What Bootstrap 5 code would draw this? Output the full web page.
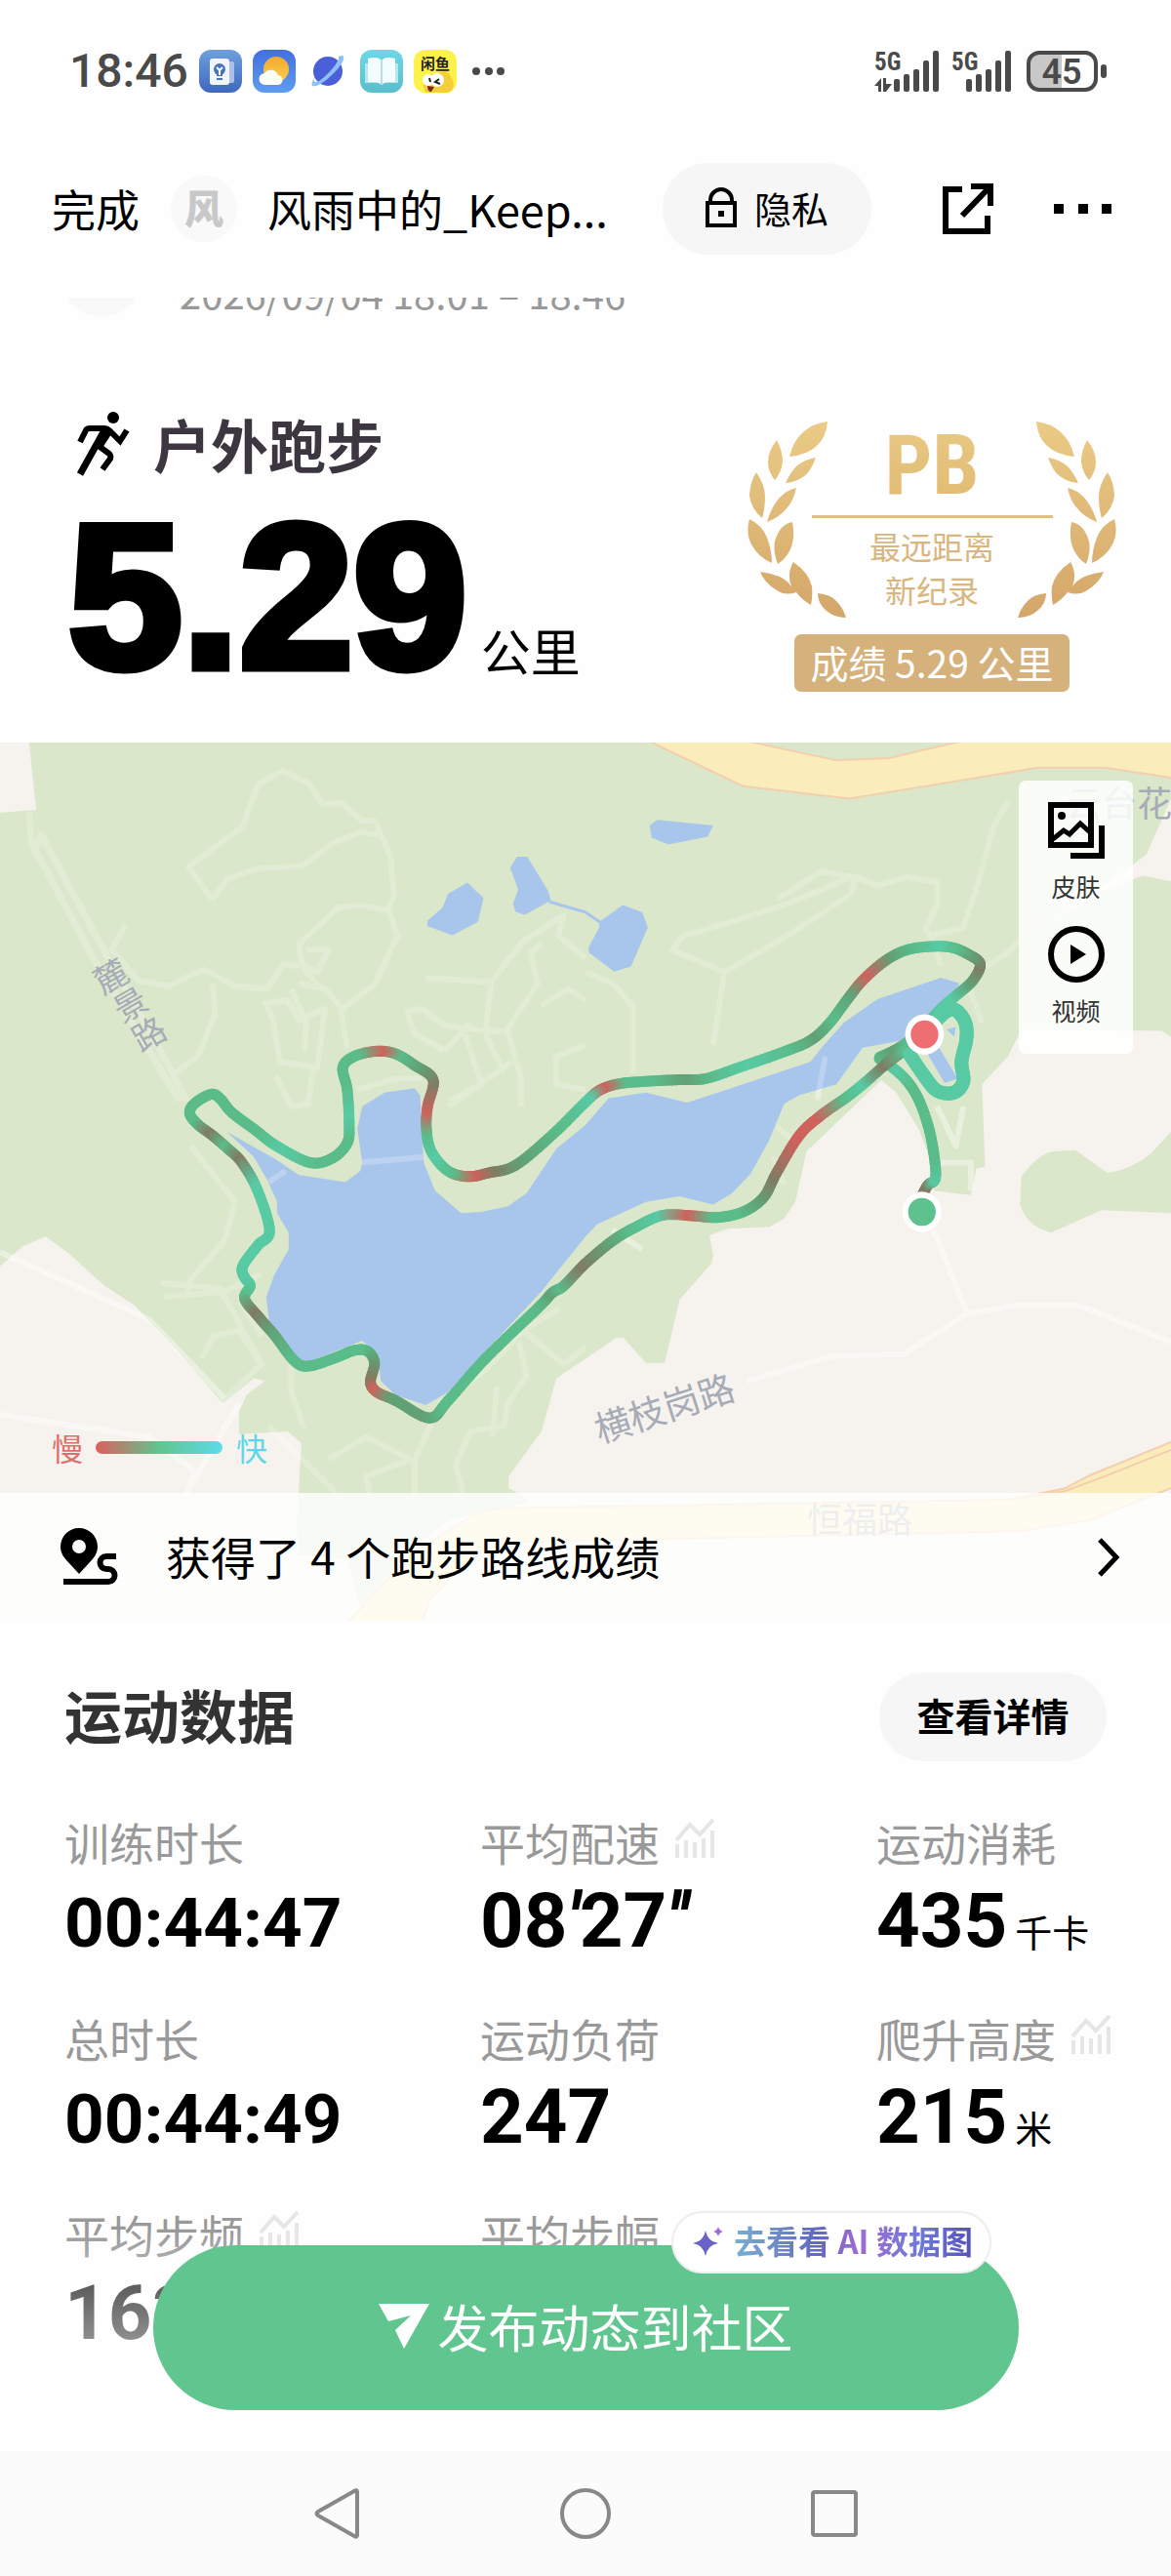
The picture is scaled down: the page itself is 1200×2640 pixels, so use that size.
<!DOCTYPE html>
<html lang="zh-CN">
<head>
<meta charset="utf-8">
<meta name="viewport" content="width=device-width, initial-scale=1">
<title>户外跑步</title>
<link href="https://cdn.jsdelivr.net/npm/bootstrap@5.3.0/dist/css/bootstrap.min.css" rel="stylesheet">
<style>
  body { font-family: "Noto Sans CJK SC", sans-serif; color: #000; background: #fefefe; overflow-x: hidden; }
  button { font-family: inherit; color: inherit; }
  svg { display: block; flex: none; overflow: visible; }
  .num { font-family: Roboto, "Noto Sans CJK SC", sans-serif; }
  .plain { border: 0; background: none; padding: 0; }

  .statusbar { height: 146px; padding: 0 66px 0 71px; color: #4a4a4a; }
  .clock { font-size: 48px; line-height: 60px; font-weight: 500; }
  .apps { gap: 11px; margin-left: 11px; }
  .signals { gap: 11px; }

  .topbar { padding: 21px 60px 44px 53px; font-size: 45px; line-height: 60px; }
  .avatar { width: 68px; height: 68px; margin-left: 32px; background: #f9f9f9; color: #c8c8c8; font-size: 40px; line-height: 64px; font-weight: 900; }
  .name { margin-left: 31px; }
  .pill { background: #f6f6f6; border: 0; border-radius: 50px; height: 94px; }
  .pill-privacy { width: 214px; font-size: 38px; gap: 18px; margin-left: auto; margin-right: 73px; padding-bottom: 4px; }
  .more { margin-left: 62px; }

  .peek { height: 60px; overflow: hidden; padding: 0 62px; color: #999; font-size: 40px; line-height: 50px; }
  .peek-row { margin-top: -64px; }
  .peek-dot { width: 84px; height: 84px; margin-right: 38px; background: #f9f9f9; }

  .hero { height: 396px; padding: 57px 56px 0 70px; }
  .hero-title { font-size: 59px; line-height: 66px; color: #3b3640; font-weight: 700; margin-left: 23px; }
  .distance { margin-top: 45px; line-height: 160px; }
  .distance-value { font-family: "Liberation Sans", Arial, sans-serif; font-size: 210px; font-weight: 700; line-height: 158px; -webkit-text-stroke: 9px #000; }
  .distance-unit { font-size: 51px; line-height: 50px; margin-left: 14px; }
  .award { width: 378px; margin-top: 10px; }
  .wreath { height: 202px; position: relative; }
  .wreath svg { position: absolute; inset: 0; }
  .pb { font-family: "Roboto Condensed", "Liberation Sans Narrow", "Open Sans Condensed", Roboto, sans-serif; font-weight: 700; font-size: 86px; line-height: 90px; padding-bottom: 6px; background: linear-gradient(#e9c983, #dfb970); -webkit-background-clip: text; color: transparent; }
  .award-rule { width: 247px; height: 3px; background: #e0c083; }
  .award-text { font-size: 32px; line-height: 45px; color: #d9b680; margin-top: 6px; }
  .award-score { background: #d5b17b; color: #fff; border-radius: 7px; font-size: 39px; line-height: 57px; padding: 0 16px 2px; margin-top: 16px; }

  .map { position: relative; aspect-ratio: 1200 / 900; overflow: hidden; }
  .map > svg { position: absolute; inset: 0; width: 100%; height: 100%; }
  .lane { fill: none; stroke: #fff; stroke-opacity: .22; stroke-width: 6; stroke-linejoin: round; }
  .map path, .map line { vector-effect: non-scaling-stroke; }
  .water { fill: #a8c6ec; }
  .park { fill: #dae7ca; }
  .town { fill: #f6f3ef; }
  .road { fill: #faedbb; stroke: #f3cfae; stroke-width: 2; }
  .tools { position: absolute; top: 39px; right: 39px; width: 117px; height: 280px; background: rgba(255,255,255,.85); border-radius: 7px; padding-top: 22px; font-size: 25px; line-height: 36px; color: #333; }
  .tools button { color: #333; margin-bottom: 23px; }
  .tools svg { margin-bottom: 10px; }
  .legend-row { position: absolute; left: 53px; bottom: 156px; font-size: 32px; line-height: 44px; }
  .ramp { width: 130px; height: 13px; border-radius: 7px; background: linear-gradient(90deg, #dc5f5c, #60c58f 50%, #5fdbea); margin: 0 14px 0 13px; }
  .slow { color: #df6f6b; }
  .fast { color: #63d5ea; }
  .routes { position: absolute; inset: auto 0 0 0; height: 131px; background: rgba(255,255,255,.8); color: #000; text-decoration: none; padding: 0 52px 0 62px; font-size: 46px; line-height: 60px; gap: 48px; }
  .routes span { padding-bottom: 4px; }

  .stats { padding: 53px 66px 0; }
  .stats-title { font-size: 59px; line-height: 86px; font-weight: 700; color: #333; margin: 0; padding-bottom: 5px; }
  .pill-detail { width: 233px; height: 91px; font-size: 39px; font-weight: 700; padding: 0 0 5px; }
  .metrics { display: grid; grid-template-columns: minmax(0, 426fr) minmax(0, 406fr) minmax(0, 236fr); row-gap: 57px; margin: 59px 0 0; }
  .metrics dt { font-size: 46px; line-height: 46px; height: 50px; font-weight: 400; color: #999; white-space: nowrap; gap: 16px; }
  .metrics dt svg { width: 40px; height: 40px; }
  .metrics dd { margin: 14px 0 0; font-size: 78px; line-height: 82px; font-weight: 700; white-space: nowrap; height: 80px; }
  .metrics dd.clocked { font-size: 71px; line-height: 86px; }
  .unit { font-size: 38px; font-weight: 400; margin-left: 8px; }

  .publish { position: relative; margin-top: -109px; padding: 0 156px 42px 157px; }
  .publish::before { content: ""; position: absolute; inset: -16px 0 0 0; background: linear-gradient(rgba(254,254,254,0), rgba(254,254,254,.36) 56px, rgba(254,254,254,.62) 130px, #fefefe 170px); }
  .publish-btn { position: relative; height: 169px; border: 0; border-radius: 85px; background: #60c58f; color: #fff; font-size: 52px; gap: 8px; padding: 0 0 3px; }
  .ai-chip { position: absolute; top: -35px; right: 184px; height: 64px; border-radius: 32px; border: 2px solid #eeeef2; background: #fff; padding: 0 17px 3px 20px; gap: 11px; font-size: 33px; font-weight: 700; }
  .ai-chip span { background: linear-gradient(90deg, #7ab0d2, #6168c0 35%, #a06bd0 52%, #6f7ad8 78%, #5550b8); -webkit-background-clip: text; color: transparent; }
  .sysnav { height: 128px; background: #fbfbfb; padding: 0 321px; }
</style>
<script src="https://cdn.jsdelivr.net/npm/bootstrap@5.3.0/dist/js/bootstrap.bundle.min.js"></script>
</head>
<body>
<div class="statusbar d-flex align-items-center">
  <span class="clock num">18:46</span>
  <div class="apps d-flex align-items-center">
    <svg width="44" height="44" viewBox="0 0 44 44"><defs><linearGradient id="a" x2="0" y2="1"><stop stop-color="#6ea0dc"/><stop offset="1" stop-color="#3f68be"/></linearGradient></defs><rect width="44" height="44" rx="12" fill="url(#a)"/><rect x="27" y="12" width="9" height="22" rx="2" fill="#a9c0ea"/><rect x="11" y="9" width="20" height="27" rx="3" fill="#f2f6fc"/><circle cx="21" cy="20" r="6" fill="#4672bf"/><path d="M18 24h6v3h-6zM18 29h6v2h-6z" fill="#4672bf"/><path d="M18 18l3 3 3-3M21 21v5" fill="none" stroke="#fff" stroke-width="2"/></svg>
    <svg width="44" height="44" viewBox="0 0 44 44"><defs><linearGradient id="b" x2="0" y2="1"><stop stop-color="#426fe0"/><stop offset="1" stop-color="#5d9df0"/></linearGradient><linearGradient id="c" x2="0" y2="1"><stop stop-color="#f3a92e"/><stop offset="1" stop-color="#f8cf4c"/></linearGradient></defs><rect width="44" height="44" rx="12" fill="url(#b)"/><circle cx="24" cy="20" r="13" fill="url(#c)"/><path d="M13 36a6 6 0 0 1-1-12 8 8 0 0 1 14 2 5 5 0 0 1-1 10z" fill="#fffdf8"/></svg>
    <svg width="44" height="44" viewBox="0 0 44 44"><circle cx="22" cy="22" r="15" fill="#4a5fd8"/><path d="M8 29c-4 7-3 9 2 8C18 35 36 18 38 10c1-4-1-5-5-3 2 6-19 27-23 26-2 0-3-2-2-4z" fill="#8fc0f8"/></svg>
    <svg width="44" height="44" viewBox="0 0 44 44"><defs><linearGradient id="d" x2="0" y2="1"><stop stop-color="#6cd8e8"/><stop offset="1" stop-color="#5bbecb"/></linearGradient></defs><rect width="44" height="44" rx="12" fill="url(#d)"/><path d="M5 14h34v20H5z" fill="#b6e6ee"/><path d="M22 11c-4-4-9-3-14-2v24c5 0 10-1 14 3 4-4 9-3 14-3V9c-5-1-10-2-14 2z" fill="#f3fcfe"/><path d="M22 11v25" stroke="#b5e0ea" stroke-width="2"/></svg>
    <svg width="44" height="44" viewBox="0 0 44 44"><rect width="44" height="44" rx="12" fill="#fdf248"/><path d="M10 38Q8 24 23 25 34 18 38 28q5 6 1 14-3 2-6 2H12z" fill="#f6cf35"/><circle cx="15" cy="31" r="6" fill="#fff"/><circle cx="24" cy="31" r="7" fill="#fff"/><path d="M16 29l1 4M26 30l-4 3 5 2" fill="none" stroke="#222" stroke-width="2"/><path d="M14 37l7 1-3 5q-4 0-4-6z" fill="#7b2a16"/><text x="22" y="20" font-size="15" font-weight="700" text-anchor="middle" fill="#222">闲鱼</text></svg>
  </div>
  <svg class="ms-3" width="36" height="10" viewBox="0 0 36 10" fill="#4a4a4a"><circle cx="4" cy="5" r="4"/><circle cx="17" cy="5" r="4"/><circle cx="29" cy="5" r="4"/></svg>
  <div class="signals d-flex ms-auto align-items-center">
    <svg width="68" height="42" viewBox="0 0 68 42" fill="#4a4a4a"><text x="0" y="20" font-size="25" font-weight="700" font-family="Roboto Condensed, Roboto">5G</text><path d="M7 28v14h-3v-6h-4zM9 28h3v6h6l-6 8h-3z"/><rect x="20" y="29" width="6" height="13" rx="2"/><rect x="30" y="24" width="6" height="18" rx="2"/><rect x="40" y="19" width="6" height="23" rx="2"/><rect x="50" y="10" width="6" height="32" rx="2"/><rect x="60" y="0" width="6" height="42" rx="2"/></svg>
    <svg width="66" height="42" viewBox="0 0 66 42" fill="#4a4a4a"><text x="0" y="20" font-size="25" font-weight="700" font-family="Roboto Condensed, Roboto">5G</text><rect x="15" y="29" width="6" height="13" rx="2"/><rect x="25" y="24" width="6" height="18" rx="2"/><rect x="35" y="19" width="6" height="23" rx="2"/><rect x="45" y="10" width="6" height="32" rx="2"/><rect x="55" y="0" width="6" height="42" rx="2"/></svg>
    <svg width="82" height="42" viewBox="0 0 82 42"><path d="M12 2h24v38H12A10 10 0 0 1 2 30V12A10 10 0 0 1 12 2z" fill="#c8c8c8"/><rect x="2" y="2" width="69" height="38" rx="11" fill="none" stroke="#4a4a4a" stroke-width="4"/><rect x="76" y="14" width="6" height="14" rx="3" fill="#4a4a4a"/><text x="36" y="34" font-family="Roboto" font-weight="600" font-size="36" text-anchor="middle" fill="#4a4a4a">45</text></svg>
  </div>
</div>

<header class="topbar d-flex align-items-center">
  <button class="plain">完成</button>
  <span class="avatar rounded-circle text-center">风</span>
  <span class="name text-nowrap">风雨中的_Keep...</span>
  <button class="pill pill-privacy d-flex align-items-center justify-content-center"><svg width="32" height="41" viewBox="0 0 32 41" fill="none" stroke="#000" stroke-width="4"><path d="M5 15V13a11 11 0 0 1 22 0v2"/><rect x="2" y="16" width="28" height="23"/><rect x="13" y="24" width="6" height="6" fill="#000" stroke="none"/></svg>隐私</button>
  <button class="plain" aria-label="分享"><svg width="52" height="52" viewBox="0 0 52 52" fill="none" stroke="#000" stroke-width="6"><path d="M20 6H3v43h43V33M29 3h20v20M48 4L20 33"/></svg></button>
  <button class="plain more" aria-label="更多"><svg width="60" height="52" viewBox="0 0 60 52"><path d="M0 21h10v10H0zM25 21h10v10H25zM49 21h10v10H49z"/></svg></button>
</header>

<div class="peek">
  <div class="peek-row d-flex align-items-end">
    <span class="peek-dot rounded-circle"></span>
    <span>2026/09/04 18:01 – 18:46</span>
  </div>
</div>

<section class="hero d-flex justify-content-between">
  <div>
    <div class="d-flex align-items-center">
      <svg width="64" height="66" viewBox="-7 0 64 66" fill="none" stroke="#000"><circle cx="39" cy="6" r="6" fill="#000" stroke="none"/><path d="M5 31l6-12q1-2 4-2h15q3 0 5 2l11 11 7-11" stroke-width="6"/><path d="M28 15h5l6 5-11 17-7-3z" fill="#000" stroke="none"/><path d="M30 19L5 64" stroke-width="7"/><path d="M24 35l11 8q2 2 1 5l-8 11" stroke-width="6"/></svg>
      <span class="hero-title">户外跑步</span>
    </div>
    <div class="distance d-flex align-items-end"><span class="distance-value">5.29</span><span class="distance-unit">公里</span></div>
  </div>
  <div class="award d-flex flex-column align-items-center">
    <div class="wreath w-100 d-flex flex-column align-items-center">
      <svg width="378" height="202" viewBox="764 432 378 202">
        <defs><linearGradient id="gold" gradientUnits="userSpaceOnUse" x1="0" y1="432" x2="0" y2="634"><stop stop-color="#ebcb86"/><stop offset="1" stop-color="#d3a669"/></linearGradient>
        <g id="twig"><path d="M846 432Q845 447 836 456 826 466 807 468 811 451 822 442 831 434 846 432zM794 451Q800 462 800 473 799 484 792 492 785 483 785 474 785 462 794 451zM834 469Q829 483 822 488 814 494 803 495 808 484 814 478 822 471 834 469zM773 484Q782 497 782 509 782 521 779 531 767 521 766 507 767 493 773 484zM814 500Q811 514 804 521 797 530 784 535 787 524 793 515 801 503 814 500zM766 532Q779 538 784 551 789 564 789 577 775 571 768 558 762 546 766 532zM810 535Q813 551 808 563 803 573 795 578 790 565 792 555 797 537 810 535zM811 576Q827 587 830 601 831 612 829 620 819 614 814 607 803 611 794 605 781 597 777 586 787 587 797 591 805 595 809 601 804 588 811 576zM836 608Q849 609 855 616 862 623 865 633 853 633 845 626 836 619 836 608z"/></g></defs>
        <use href="#twig" fill="url(#gold)"/><use href="#twig" fill="url(#gold)" transform="matrix(-1 0 0 1 1906 0)"/>
      </svg>
      <span class="pb">PB</span>
      <span class="award-rule"></span>
      <span class="award-text text-center">最远距离<br>新纪录</span>
    </div>
    <span class="award-score">成绩 5.29 公里</span>
  </div>
</section>

<section class="map">
  <svg viewBox="0 0 3136 1568" preserveAspectRatio="none">
    <rect class="park" width="3136" height="1568"/>
    <path class="town" d="M0 0H78L97 120 0 125zM0 935L60 900 122 882 180 910 280 970 360 1005 480 1090 597 1180 680 1135 710 1140 660 1165 640 1195V1235L770 1230 807 1250 795 1400 800 1450 930 1460 975 1568H0z"/>
    <path class="town" d="M2360 603L2400 625 2460 690 2500 760V800L2600 808 2615 760 2638 758 2630 610 2700 560 2735 512 3110 515 3136 525V1568H940L1100 1440 1200 1390 1420 1355 1362 1330V1310L1450 1230 1490 1135 1568 1100 1650 1063H1670L1730 1108H1780L1820 995 1905 930 1910 915 1900 880 1950 868 2060 865 2100 850 2130 820 2160 730z"/>
    <path class="town" d="M2800 320L2980 245 3070 200 3136 100V248L3060 238 2960 262 2830 310z"/>
    <path class="park" d="M2735 775Q2780 735 2820 730L2880 728 2965 768Q3020 765 3080 735L3136 695V840L2950 835 2815 875Q2750 865 2732 825z"/>
    <g class="lane">
      <path d="M78 125L85 180 250 385 480 640M95 190L110 165 290 385 450 575 500 640" stroke-width="7"/>
      <path d="M568 280L505 222 650 150 690 75 757 50 825 72 865 110 915 108 970 140 1005 140 1020 165 1045 200 1055 270 1040 300 965 290 905 295 800 360 810 400 860 440M568 280L610 243 690 225 810 220 890 180 965 160 1015 165M1040 300L1065 345 1005 430 910 480M800 400L760 395 715 440 630 435 545 405 450 435 370 425 300 370 335 325M570 430L575 485 530 560 470 590M710 465L770 460 800 495 870 475 850 580 750 570 730 490zM800 430L870 440 910 470 930 545M740 595L780 650 825 645 840 580M820 370L880 370 850 410 800 390M780 440L820 500 815 550"/>
      <path d="M1140 420L1315 428 1400 355 1510 308 1495 345 1568 385M1315 428L1300 515 1190 505 1130 475 1090 480 1110 520 1190 550M1300 515L1360 515 1395 600V650M1245 520L1290 610 1200 640M1300 520L1350 590M1190 550L1260 500M1450 470L1520 440 1568 460M1370 570L1200 650M1450 360L1420 375 1440 430 1360 510M1568 540L1490 560 1490 610 1568 620M955 620L1060 600 1130 600"/>
      <path d="M1568 410L1640 430 1695 470V590M1940 410L1800 370 1830 345 1960 320 2100 290 2280 240 2200 230 2080 280M1940 410L2120 340 2280 270 2290 240 2350 255 2430 240 2510 250 2510 290 2480 330 2490 345 2580 330 2620 250 2660 150 2700 105M1940 410L1910 540M2490 345L2520 400M2640 400L2700 375 2800 300M2590 430L2630 500M2200 550L2190 640M2080 685L2140 720M2070 740L2100 790"/>
      <path d="M510 720L630 820 600 890 510 960 500 985M430 965L590 975 700 1110M440 990L600 980M700 950L600 980M540 1100L570 1060 640 1050 700 1110 590 1180M640 990L700 1060M780 1110L780 1160 815 1225M720 1220L900 1340M880 1280L980 1240 1100 1280 980 1310 990 1340M1110 1568V1280L1180 1180 1300 1120 1400 1050 1500 1010M1400 1050L1510 1110 1568 1080M1390 1070L1410 1130 1360 1180 1350 1220 1260 1230 1220 1290 1240 1340M1330 1150L1320 1240"/>
      <path d="M1640 870L1720 905M2500 870L2590 1020M2000 1140L2230 1095 2420 1092 2590 1020 2720 1005 2890 1005 3136 1070M2510 650L2560 720 2580 650M2510 750H2600V800M0 1200L400 1240 520 1300 500 1340 640 1180M0 910L400 1030 600 1170" stroke-opacity=".4"/>
    </g>
    <path class="water" d="M608 695L740 745 800 772 925 785 965 765 970 750 957 690 970 650 1030 625 1110 617 1125 630 1130 690 1135 750 1165 800 1235 840 1290 838 1360 828 1410 805 1490 725 1568 683 1630 635 1730 625 1840 643 1990 610 2170 570 2200 545 2260 500 2350 458 2520 420 2570 430 2540 460 2430 530 2310 545 2240 610 2140 630 2100 645 2060 710 2010 770 1960 805 1910 825 1820 810 1730 820 1600 860 1568 882 1450 980 1310 1080 1200 1160 1140 1183 1060 1165 1020 1140 1010 1090 970 1068 830 1105 790 1100 720 1030 713 990 735 950 773 905V875L742 840V820L715 780 680 740z"/>
    <path class="water" d="M1145 318L1185 295 1200 270 1252 250 1295 278 1280 320 1212 344 1145 328zM1385 204H1412L1468 265 1475 282 1405 308 1380 302 1374 288 1388 262 1366 224zM1605 320L1668 290 1720 303 1735 330 1690 400 1645 409 1577 375V365L1605 330zM1740 148L1760 138 1910 148 1895 168 1790 182 1745 170zM2470 540L2515 545 2565 600 2530 608zM2535 512L2560 508 2555 525z"/>
    <path d="M1470 284L1568 303 1610 322" fill="none" stroke="#a8c6ec" stroke-width="3"/>
    <path class="lane" d="M720 785L765 765M970 750L1135 740M2210 560L2190 635"/>
    <path class="road" d="M1730 -5L1990 78 2275 100 2780 45H2960L3140 63V-5H2590L2380 28 2240 32 1985 -5z"/>
    <path class="road" d="M2700 1352L2850 1332 2920 1308 3140 1248V1262L2960 1310 2850 1337z"/>
    <path class="road" d="M930 1572L1100 1450 1270 1378 1340 1367 2700 1352 2850 1337 2960 1310 3140 1262V1330L2920 1388 2730 1408 1568 1425 1350 1428 1270 1450 1150 1530 1130 1572z"/>
    <g id="route" fill="none"></g>
    <ellipse cx="2469" cy="838" rx="52" ry="36" fill="#fff"/><ellipse cx="2469" cy="838" rx="37" ry="25" fill="#5dc28e"/>
    <ellipse cx="2476" cy="521" rx="52" ry="36" fill="#fff"/><ellipse cx="2476" cy="521" rx="37" ry="25" fill="#ee6f72"/>
  </svg>
  <svg viewBox="0 0 1200 900" preserveAspectRatio="none" fill="#a6abb5" text-anchor="middle">
    <g font-size="34"><text transform="translate(114 240) rotate(-30)" y="12">麓</text><text transform="translate(134 269) rotate(-30)" y="12">景</text><text transform="translate(153 299) rotate(-30)" y="12">路</text></g>
    <text transform="translate(681 683) rotate(-18)" y="13" font-size="37">横枝岗路</text>
    <text x="881" y="810" font-size="36">恒福路</text>
    <text x="1093" y="76" font-size="36" text-anchor="start">云台花</text>
  </svg>
  <div class="tools d-flex flex-column align-items-center">
    <button class="plain d-flex flex-column align-items-center"><svg width="58" height="58" viewBox="0 0 58 58" fill="none" stroke="#000" stroke-width="6"><rect x="3" y="3" width="41" height="41"/><path d="M23 55h32V24"/><path d="M5 38l11-9 6 4 11-11 10 9" stroke-width="5"/><circle cx="14" cy="14" r="4" fill="#000" stroke="none"/></svg>皮肤</button>
    <button class="plain d-flex flex-column align-items-center"><svg width="58" height="58" viewBox="0 0 58 58"><circle cx="29" cy="29" r="26" fill="none" stroke="#000" stroke-width="6"/><path d="M23 19l16 10-16 10z"/></svg>视频</button>
  </div>
  <div class="legend-row d-flex align-items-center"><span class="slow">慢</span><span class="ramp"></span><span class="fast">快</span></div>
  <a class="routes d-flex align-items-center" href="#routes">
    <svg width="60" height="60" viewBox="0 0 60 60"><path d="M19 0a19 19 0 0 1 19 19c0 7-4 12-8 16L19 47 8 35C4 31 0 26 0 19A19 19 0 0 1 19 0zm0 12a7 7 0 1 0 0 14 7 7 0 0 0 0-14z" fill-rule="evenodd"/><path d="M3 55h46a6 6 0 0 0 0-13h-2a6 6 0 0 1 0-13h10" fill="none" stroke="#000" stroke-width="6"/></svg>
    <span>获得了 4 个跑步路线成绩</span>
    <svg class="ms-auto" width="24" height="40" viewBox="0 0 24 40"><path d="M3 2l17 18L3 38" fill="none" stroke="#000" stroke-width="5"/></svg>
  </a>
</section>

<svg width="0" height="0" class="position-absolute"><symbol id="trend" viewBox="0 0 40 40"><path d="M2 26v14M11 22v18M20 24v16M29 20v20M38 12v28" stroke="#e6e6e6" stroke-width="4"/><path d="M1 22L15 6l10 10L39 1" fill="none" stroke="#e6e6e6" stroke-width="4"/></symbol></svg>

<section class="stats">
  <div class="d-flex justify-content-between align-items-center">
    <h2 class="stats-title">运动数据</h2>
    <button class="pill pill-detail">查看详情</button>
  </div>
  <dl class="metrics">
    <div><dt>训练时长</dt><dd class="num clocked">00:44:47</dd></div>
    <div><dt class="d-flex">平均配速<svg><use href="#trend"/></svg></dt><dd class="num">08<i>′</i>27<i>′′</i></dd></div>
    <div><dt>运动消耗</dt><dd class="num">435<span class="unit">千卡</span></dd></div>
    <div><dt>总时长</dt><dd class="num clocked">00:44:49</dd></div>
    <div><dt>运动负荷</dt><dd class="num">247</dd></div>
    <div><dt class="d-flex">爬升高度<svg><use href="#trend"/></svg></dt><dd class="num">215<span class="unit">米</span></dd></div>
    <div><dt class="d-flex">平均步频<svg><use href="#trend"/></svg></dt><dd class="num">163</dd></div>
    <div><dt>平均步幅</dt><dd></dd></div>
  </dl>
</section>

<div class="publish">
  <button class="publish-btn w-100 d-flex align-items-center justify-content-center"><svg width="52" height="46" viewBox="0 0 52 46"><path d="M0 0h52L26 46 17 27 33 12 10 18z" fill="#fff"/></svg>发布动态到社区</button>
  <a class="ai-chip d-flex align-items-center text-decoration-none" href="#ai"><svg width="31" height="30" viewBox="0 0 31 30"><path d="M13 4q2 11 13 13-11 2-13 13-2-11-13-13Q11 15 13 4z" fill="#6a62c4"/><path d="M26 0q1 4 5 5-4 1-5 5-1-4-5-5 4-1 5-5z" fill="#a268cf"/></svg><span>去看看 AI 数据图</span></a>
</div>

<nav class="sysnav d-flex justify-content-between align-items-center">
  <button class="plain" aria-label="返回"><svg width="48" height="54" viewBox="0 0 48 54"><path d="M45 5v44q0 3-3 1L5 29q-3-2 0-4L42 4q3-2 3 1z" fill="none" stroke="#888" stroke-width="4"/></svg></button>
  <button class="plain" aria-label="主页"><svg width="54" height="54" viewBox="0 0 54 54"><circle cx="27" cy="27" r="24" fill="none" stroke="#888" stroke-width="4"/></svg></button>
  <button class="plain" aria-label="最近任务"><svg width="48" height="48" viewBox="0 0 48 48"><rect x="2" y="2" width="44" height="44" rx="2" fill="none" stroke="#888" stroke-width="4"/></svg></button>
</nav>

<script>
  // Pace colours: slow, braking, steady, brisk, fast
  const tone = { r: [206, 98, 92], b: [128, 124, 100], d: [98, 160, 118], g: [90, 188, 138], t: [88, 202, 164] };
  const legs = [
    { w: 11, p: "2470,808,b 2485,790,b 2505,778,t 2502,740,g 2488,690,g 2462,640,g 2430,605,g 2390,580,t 2355,565,g" },
    { w: 11, p: "2355,562,g 2400,548,d 2440,530,g 2480,505,d 2520,475,t 2560,452,t 2605,425,d 2625,395,b 2590,377,d 2550,366,g 2500,364,t 2430,370,g 2370,390,d 2310,425,r 2270,458,d 2220,502,g 2170,532,d 2100,552,g 1980,580,t 1890,600,g 1820,602,d 1730,605,g 1660,609,g 1608,620,r 1568,642,t 1480,700,g 1380,755,d 1310,768,b 1255,775,r 1200,765,g 1155,730,t 1142,690,g 1145,650,r 1160,602,b 1110,576,d 1060,556,g 1010,551,r 950,560,g 918,580,g 930,620,g 935,680,t 930,715,g 890,742,g 830,750,g 740,720,t 680,690,g 620,660,g 590,636,g 565,628,g 522,644,g 508,662,g 530,682,g 570,702,b 610,725,g 648,750,b 690,800,t 722,872,t 690,898,t 650,935,t 655,955,t 670,970,t 655,993,g 692,1025,b 735,1058,d 790,1105,g 830,1113,g 900,1098,g 950,1085,g 985,1087,g 1003,1108,d 992,1142,b 1010,1160,r 1060,1175,d 1150,1206,d 1200,1175,g 1300,1100,g 1440,1010,g 1480,982,d 1510,970,g 1568,930,b 1640,890,d 1700,866,g 1775,844,t 1855,845,r 1920,848,g 1990,838,g 2045,812,d 2080,768,b 2140,702,r 2200,665,r 2270,632,g 2320,605,t 2375,573,b 2430,545,g 2475,515,g" },
    { w: 14, p: "2475,520,t 2530,482,t 2560,478,t 2585,500,t 2588,530,t 2575,570,t 2580,605,t 2555,625,t 2510,622,t 2475,595,t 2435,556,t" }
  ];
  const layer = document.getElementById("route");
  const spline = (a, b, c, d, t) => .5 * (2 * b + (c - a) * t + (2 * a - 5 * b + 4 * c - d) * t * t + (3 * b - a - 3 * c + d) * t * t * t);
  function stroke(x1, y1, x2, y2, color, width) {
    const l = document.createElementNS("http://www.w3.org/2000/svg", "line");
    const attrs = { x1, y1, x2, y2, stroke: color, "stroke-width": width, "stroke-linecap": "round" };
    for (const k in attrs) l.setAttribute(k, attrs[k]);
    layer.append(l);
  }
  for (const leg of legs) {
    const pts = leg.p.split(" ").map(s => { const [x, y, c] = s.split(","); return { x: +x, y: +y, c: tone[c] }; });
    const at = i => pts[Math.max(0, Math.min(pts.length - 1, i))];
    let prev = pts[0];
    for (let i = 0; i < pts.length - 1; i++) {
      for (let k = 1; k <= 8; k++) {
        const t = k / 8;
        const x = spline(at(i - 1).x, at(i).x, at(i + 1).x, at(i + 2).x, t);
        const y = spline(at(i - 1).y, at(i).y, at(i + 1).y, at(i + 2).y, t);
        const c = at(i).c.map((v, n) => Math.round(v + (at(i + 1).c[n] - v) * t));
        stroke(prev.x, prev.y, x, y, `rgb(${c})`, leg.w);
        prev = { x, y };
      }
    }
  }
</script>
</body>
</html>
